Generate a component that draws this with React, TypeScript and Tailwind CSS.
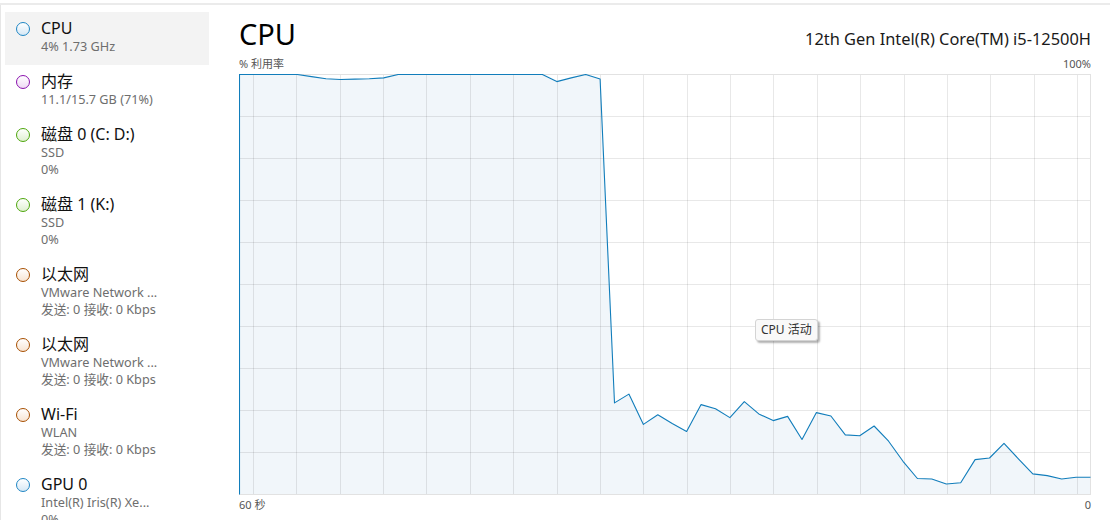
import React from "react";

type Item = {
  title: string;
  lines: string[];
  border: string;
  fill: string;
  selected?: boolean;
};

const items: Item[] = [
  { title: "CPU", lines: ["4% 1.73 GHz"], border: "border-[#1f86c4]", fill: "to-[#d6e8f5]", selected: true },
  { title: "内存", lines: ["11.1/15.7 GB (71%)"], border: "border-[#8b12ae]", fill: "to-[#efd9f5]" },
  { title: "磁盘 0 (C: D:)", lines: ["SSD", "0%"], border: "border-[#4da60c]", fill: "to-[#dff0d0]" },
  { title: "磁盘 1 (K:)", lines: ["SSD", "0%"], border: "border-[#4da60c]", fill: "to-[#dff0d0]" },
  { title: "以太网", lines: ["VMware Network ...", "发送: 0 接收: 0 Kbps"], border: "border-[#a74f01]", fill: "to-[#f8e4d2]" },
  { title: "以太网", lines: ["VMware Network ...", "发送: 0 接收: 0 Kbps"], border: "border-[#a74f01]", fill: "to-[#f8e4d2]" },
  { title: "Wi-Fi", lines: ["WLAN", "发送: 0 接收: 0 Kbps"], border: "border-[#a74f01]", fill: "to-[#f8e4d2]" },
  { title: "GPU 0", lines: ["Intel(R) Iris(R) Xe...", "0%"], border: "border-[#1f86c4]", fill: "to-[#d6e8f5]" },
];

// CPU usage, one sample per second, oldest first
const usage = [
  100, 100, 100, 100, 100, 99.5, 99, 98.8, 98.9, 99, 99.2, 100, 100, 100, 100,
  100, 100, 100, 100, 100, 100, 100, 98.3, 99.2, 100, 98.9, 21.8, 23.9, 16.7,
  19.0, 16.9, 15.0, 21.4, 20.4, 18.3, 22.1, 19.2, 17.6, 18.6, 13.1, 19.5, 18.7,
  14.2, 14.0, 16.3, 12.7, 7.9, 3.8, 3.7, 2.5, 2.8, 8.3, 8.7, 12.2, 8.5, 4.9,
  4.5, 3.7, 4.1, 4.1,
];

const font = { fontFamily: '"Noto Sans", "Noto Sans CJK SC", sans-serif' };

function SidebarItem({ item }: { item: Item }) {
  return (
    <div
      className={`flex items-start pl-[11px] pt-[6px] pb-[10px] ${
        item.selected ? "bg-[#f3f3f3]" : ""
      }`}
    >
      <span
        className={`mt-[4px] h-[14px] w-[14px] shrink-0 rounded-full border ${item.border} bg-linear-to-b from-white ${item.fill}`}
      />
      <div className="ml-[11px] min-w-0">
        <div className="text-[16px] leading-[20px] text-[#111] whitespace-nowrap">
          {item.title}
        </div>
        {item.lines.map((l, i) => (
          <div
            key={i}
            className="text-[12.7px] leading-[17px] text-[#6e6e6e] whitespace-nowrap"
          >
            {l}
          </div>
        ))}
      </div>
    </div>
  );
}

function UsageChart() {
  const W = 851;
  const H = 420;
  const xs = usage.map((_, i) => 0.5 + (i * W) / (usage.length - 1));
  const ys = usage.map((v) => 0.5 + ((100 - v) / 100) * H);
  const line = xs.map((x, i) => `${x.toFixed(1)},${ys[i].toFixed(1)}`).join(" L");
  const area = `M0.5,${H + 0.5} L${line} L${xs[xs.length - 1]},${H + 0.5} Z`;
  const stroke = `M0.5,${H + 0.5} L${line}`;

  const vLines: number[] = [];
  for (let k = 0; 14 + k * 43.37 < W; k++) vLines.push(Math.round(14 + k * 43.37) + 0.5);
  const hLines: number[] = [];
  for (let k = 1; k < 10; k++) hLines.push(k * 42 + 0.5);

  return (
    <svg width={852} height={421} viewBox="0 0 852 421" className="block">
      <path d={area} fill="#f1f6fa" />
      <g stroke="#000" strokeOpacity={0.09} strokeWidth={1}>
        {vLines.map((x) => (
          <line key={`v${x}`} x1={x} y1={0} x2={x} y2={H} />
        ))}
        {hLines.map((y) => (
          <line key={`h${y}`} x1={0} y1={y} x2={W} y2={y} />
        ))}
      </g>
      <rect x={0.5} y={0.5} width={W} height={H} fill="none" stroke="#e2e2e2" />
      <path d={stroke} fill="none" stroke="#117dbb" strokeWidth={1.1} strokeLinejoin="round" />
    </svg>
  );
}

export default function App() {
  return (
    <div className="h-[520px] w-[1110px] overflow-hidden bg-white pt-[3px]" style={font}>
      <div className="flex h-full border-t-2 border-[#ebebeb]">
        <aside className="w-[209px] shrink-0 border-l border-[#e6e6e6] pl-[4px] pt-[7px]">
          {items.map((item, i) => (
            <SidebarItem key={i} item={item} />
          ))}
        </aside>

        <main className="flex-1 pl-[30px] pr-[19px]">
          <div className="mt-[12px] flex items-baseline justify-between">
            <h1 className="text-[29px] leading-[34px] text-black">CPU</h1>
            <div className="text-[16.4px] text-[#1a1a1a]">12th Gen Intel(R) Core(TM) i5-12500H</div>
          </div>
          <div className="mt-[5px] flex items-end justify-between text-[11px] leading-[14px] text-[#555]">
            <span>% 利用率</span>
            <span>100%</span>
          </div>
          <div className="relative mt-[3px]">
            <UsageChart />
            <div className="absolute left-[516px] top-[245px] rounded-[3px] border border-[#d4d4d4] bg-[#f9f9f9] px-[5px] py-[2px] text-[12px] leading-[16px] text-[#333] shadow-[2px_2px_2px_rgba(0,0,0,0.3)]">
              CPU 活动
            </div>
          </div>
          <div className="mt-[3px] flex justify-between text-[11px] leading-[14px] text-[#555]">
            <span>60 秒</span>
            <span>0</span>
          </div>
        </main>
      </div>
    </div>
  );
}
